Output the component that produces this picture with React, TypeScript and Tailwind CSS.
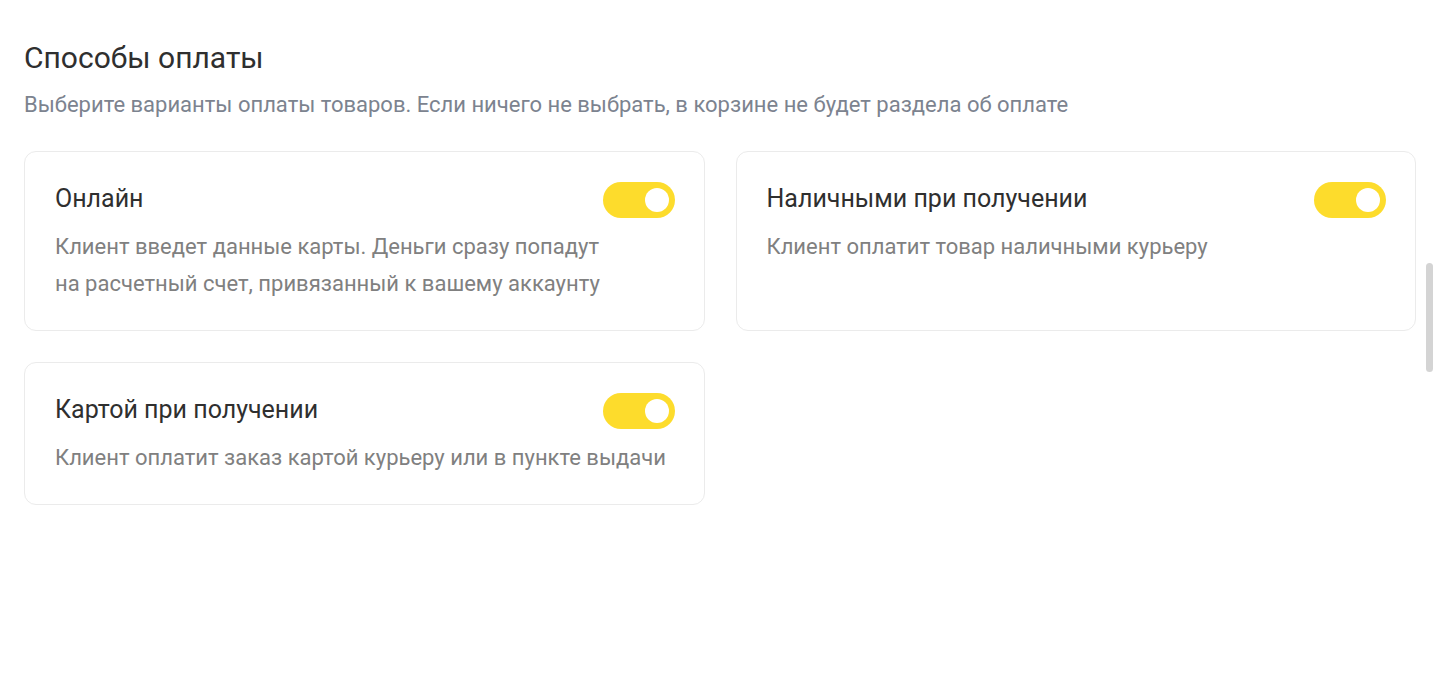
import { FC } from "react";

interface PaymentCardProps {
  title: string
  description: string[]
}

const Toggle: FC = () => (
  <div className="w-[72px] h-9 rounded-full bg-[#fddc2c] flex items-center justify-end px-[6px] shrink-0">
    <div className="w-6 h-6 rounded-full bg-white" />
  </div>
);

const PaymentCard: FC<PaymentCardProps> = ({ title, description }) => (
  <div className="rounded-xl border border-[#ebebeb] bg-white pt-[30px] pb-[28px] pl-[30px] pr-[29px]">
    <div className="flex items-center justify-between">
      <h3 className="text-[25px] leading-9 text-[#2f2f2f] -mt-[3px]">{title}</h3>
      <Toggle />
    </div>
    <p className="mt-[10px] text-[22px] leading-[37px] text-[#808080]">
      {description.map((line, i) => (
        <span key={i} className="block">{line}</span>
      ))}
    </p>
  </div>
);

export default function App() {
  return (
    <div className="relative min-h-[689px] bg-white font-['Roboto',sans-serif]">
      <div className="px-6 pt-[38px]">
        <h2 className="text-[30px] leading-10 text-[#2f2f2f]">Способы оплаты</h2>
        <p className="mt-[13px] text-[22px] leading-7 text-[#7c838f]">
          Выберите варианты оплаты товаров. Если ничего не выбрать, в корзине не будет раздела об оплате
        </p>
        <div className="mt-[32px] grid grid-cols-2 gap-[31px] w-[1392px] items-start">
          <PaymentCard
            title="Онлайн"
            description={[
              "Клиент введет данные карты. Деньги сразу попадут",
              "на расчетный счет, привязанный к вашему аккаунту",
            ]}
          />
          <PaymentCard
            title="Наличными при получении"
            description={["Клиент оплатит товар наличными курьеру", "\u00a0"]}
          />
          <PaymentCard
            title="Картой при получении"
            description={["Клиент оплатит заказ картой курьеру или в пункте выдачи"]}
          />
        </div>
      </div>
      {/* overlay scrollbar */}
      <div className="absolute right-[7px] top-[263px] w-[7px] h-[109px] rounded-full bg-[#d4d4d4]" />
    </div>
  );
}
